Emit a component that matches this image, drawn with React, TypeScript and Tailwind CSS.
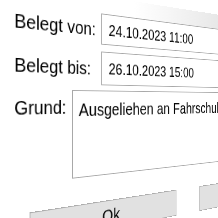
export default function App() {
  return (
    <div className="w-[218px] h-[218px] overflow-hidden bg-white">
      <div
        className="w-[360px] -mt-[20px] origin-[0px_120px] [transform:perspective(352px)_rotateY(25deg)] text-[21px] leading-none text-black whitespace-nowrap"
        style={{ fontFamily: '"Liberation Sans", Arial, sans-serif' }}
      >
        <div className="h-[20px] bg-gradient-to-r from-white via-white to-[#e4e4e4]" />
        <div className="flex flex-col pl-[16px]">
          <div className="flex items-center h-[36px]">
            <span className="w-[113px]">Belegt von:</span>
            <div className="flex items-center flex-1 h-full border border-[#a8a8a8] pl-[10px] text-[19px]">
              24.10.2023 11:00
            </div>
          </div>
          <div className="flex items-center h-[39px] mt-[8px]">
            <span className="w-[113px]">Belegt bis:</span>
            <div className="flex items-center flex-1 h-full border border-[#a8a8a8] pl-[10px] text-[19px]">
              26.10.2023 15:00
            </div>
          </div>
          <div className="flex items-start mt-[6px]">
            <span className="w-[72px] pt-[8px]">Grund:</span>
            <div className="flex-1 h-[98px] border border-[#a8a8a8] pl-[8px] pt-[10px] overflow-hidden">
              Ausgeliehen an Fahrschule
            </div>
          </div>
          <div className="flex gap-[45px] mt-[30px] pl-[18px]">
            <div className="w-[220px] h-[34px] shrink-0 flex items-center justify-center bg-[#e1e1e1] border border-[#adadad]">
              Ok
            </div>
            <div className="w-[220px] h-[34px] shrink-0 flex items-center justify-center bg-[#e1e1e1] border border-[#adadad]">
              Abbrechen
            </div>
          </div>
        </div>
      </div>
    </div>
  );
}
